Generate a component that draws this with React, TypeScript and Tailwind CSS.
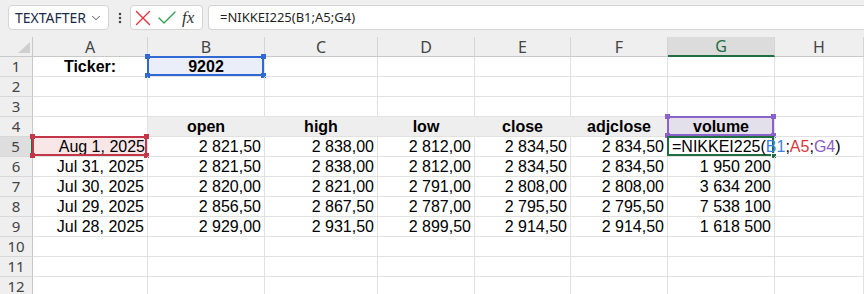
import React from 'react';
import { ChevronDown, X, Check, EllipsisVertical } from 'lucide-react';

const cols = ['A', 'B', 'C', 'D', 'E', 'F', 'G', 'H'];

const data: string[][] = [
  ['Aug 1, 2025', '2 821,50', '2 838,00', '2 812,00', '2 834,50', '2 834,50', ''],
  ['Jul 31, 2025', '2 821,50', '2 838,00', '2 812,00', '2 834,50', '2 834,50', '1 950 200'],
  ['Jul 30, 2025', '2 820,00', '2 821,00', '2 791,00', '2 808,00', '2 808,00', '3 634 200'],
  ['Jul 29, 2025', '2 856,50', '2 867,50', '2 787,00', '2 795,50', '2 795,50', '7 538 100'],
  ['Jul 28, 2025', '2 929,00', '2 931,50', '2 899,50', '2 914,50', '2 914,50', '1 618 500'],
];

const headers = ['open', 'high', 'low', 'close', 'adjclose'];

const cell = 'relative flex items-center border-r border-b border-[#e1e1e1] px-[3px] whitespace-nowrap';

// selection frame with the little corner squares
const Frame: React.FC<{ border: string; handle: string; corners?: boolean }> = ({ border, handle, corners = true }) => (
  <>
    <div className={`pointer-events-none absolute -left-px -top-px right-0 bottom-0 border-2 ${border}`} />
    {corners && (
      <>
        <div className={`absolute -left-[3px] -top-[3px] h-[5px] w-[5px] ${handle}`} />
        <div className={`absolute -right-[2px] -top-[3px] h-[5px] w-[5px] ${handle}`} />
        <div className={`absolute -left-[3px] -bottom-[2px] h-[5px] w-[5px] ${handle}`} />
        <div className={`absolute -right-[2px] -bottom-[2px] h-[5px] w-[5px] ${handle}`} />
      </>
    )}
  </>
);

const RowHead: React.FC<{ n: number; active?: boolean }> = ({ n, active }) => (
  <div
    className={`flex items-center justify-center border-b border-[#d8d8d8] text-[15px] text-[#444] ${
      active ? 'bg-[#dedede] border-r-2 border-r-[#1e6e42]' : 'bg-[#efefef] border-r border-r-[#c8c8c8]'
    }`}
    style={{ fontFamily: '"Noto Sans", sans-serif' }}
  >
    {n}
  </div>
);

export default function App() {
  return (
    <div
      className="h-[294px] w-[864px] overflow-hidden bg-white text-[16px] text-black"
      style={{ fontFamily: '"Liberation Sans", Arial, sans-serif' }}
    >
      {/* formula bar */}
      <div
        className="flex h-[37px] items-start gap-0 bg-[#efefef] pt-[5px] pl-[8px]"
        style={{ fontFamily: '"Noto Sans", sans-serif' }}
      >
        <div className="flex h-[25px] w-[101px] items-center justify-between rounded-[4px] border border-[#d4d4d4] bg-white pl-[6px] pr-[5px] text-[14px] text-[#1c2a4a]">
          <span>TEXTAFTER</span>
          <ChevronDown size={14} strokeWidth={1.6} className="text-[#444]" />
        </div>
        <div className="flex h-[25px] w-[21px] items-center justify-center">
          <EllipsisVertical size={14} strokeWidth={2.4} className="text-[#444]" />
        </div>
        <div className="flex h-[25px] w-[73px] items-center rounded-[4px] border border-[#d4d4d4] bg-white">
          <X size={26} strokeWidth={1.3} className="-ml-[1px] text-[#e0353e]" />
          <Check size={24} strokeWidth={1.4} className="-ml-[1px] text-[#2fa04f]" />
          <span className="ml-[3px] text-[17px] italic text-[#333]" style={{ fontFamily: '"Liberation Serif", serif' }}>
            fx
          </span>
        </div>
        <div className="ml-[5px] flex h-[25px] flex-1 items-center rounded-l-[4px] border border-r-0 border-[#d4d4d4] bg-white pl-[11px] text-[13px] text-[#1f1f1f]">
          =NIKKEI225(B1;A5;G4)
        </div>
      </div>

      {/* sheet */}
      <div className="grid grid-cols-[33px_115px_117px_113px_97px_96px_97px_107px_1fr] auto-rows-[20px]">
        {/* column headers */}
        <div className="relative border-r border-b border-[#c8c8c8] bg-[#efefef]">
          <svg className="absolute bottom-[3px] right-[2px]" width="12" height="11" viewBox="0 0 12 11">
            <polygon points="12,0 12,11 0,11" fill="#cfcfcf" />
          </svg>
        </div>
        {cols.map((c) => (
          <div
            key={c}
            className={`flex items-center justify-center border-r border-[#d4d4d4] text-[16px] ${
              c === 'G'
                ? 'bg-[#dcdcdc] border-b-2 border-b-[#1e6e42] text-[#1e6e42]'
                : 'bg-[#efefef] border-b border-b-[#c8c8c8] text-[#444]'
            }`}
            style={{ fontFamily: '"Noto Sans", sans-serif' }}
          >
            {c}
          </div>
        ))}

        {/* row 1 */}
        <RowHead n={1} />
        <div className={`${cell} justify-center font-bold`}>Ticker:</div>
        <div className={`${cell} justify-center bg-[#e9eef8] font-bold`}>
          9202
          <Frame border="border-[#3169d3]" handle="bg-[#3169d3]" />
        </div>
        {cols.slice(2).map((c) => (
          <div key={c} className={cell} />
        ))}

        {/* rows 2-3 */}
        {[2, 3].map((r) => (
          <React.Fragment key={r}>
            <RowHead n={r} />
            {cols.map((c) => (
              <div key={c} className={cell} />
            ))}
          </React.Fragment>
        ))}

        {/* row 4 */}
        <RowHead n={4} />
        <div className={cell} />
        {headers.map((h) => (
          <div key={h} className={`${cell} justify-center border-r-[#eeeeee] bg-[#eeeeee] font-bold`}>
            {h}
          </div>
        ))}
        <div className={`${cell} justify-center bg-[#e3dfeb] font-bold`}>
          volume
          <Frame border="border-[#8a62c9]" handle="bg-[#8a62c9]" />
        </div>
        <div className={cell} />

        {/* rows 5-9 */}
        {data.map((row, i) => (
          <React.Fragment key={i}>
            <RowHead n={i + 5} active={i === 0} />
            {row.map((v, j) => {
              if (i === 0 && j === 0) {
                return (
                  <div key={j} className={`${cell} justify-end pr-[2px] bg-[#f9e7e7]`}>
                    {v}
                    <Frame border="border-[#c4374a]" handle="bg-[#c4374a]" />
                  </div>
                );
              }
              if (i === 0 && j === 6) {
                return (
                  <div key={j} className={`${cell} justify-start`}>
                    <span className="relative z-10 pl-[1px]">
                      =NIKKEI225(<span className="text-[#3d7fdc]">B1</span>;
                      <span className="text-[#d9363e]">A5</span>;
                      <span className="text-[#8a5cc7]">G4</span>)
                    </span>
                    <Frame border="border-[#1e6e42]" handle="bg-[#1e6e42]" corners={false} />
                    <div className="absolute -right-[3px] -bottom-[3px] h-[6px] w-[6px] border border-white bg-[#1e6e42]" />
                  </div>
                );
              }
              return (
                <div key={j} className={`${cell} justify-end`}>
                  {v}
                </div>
              );
            })}
            <div className={cell} />
          </React.Fragment>
        ))}

        {/* rows 10-12 */}
        {[10, 11, 12].map((r) => (
          <React.Fragment key={r}>
            <RowHead n={r} />
            {cols.map((c) => (
              <div key={c} className={cell} />
            ))}
          </React.Fragment>
        ))}
      </div>
    </div>
  );
}
